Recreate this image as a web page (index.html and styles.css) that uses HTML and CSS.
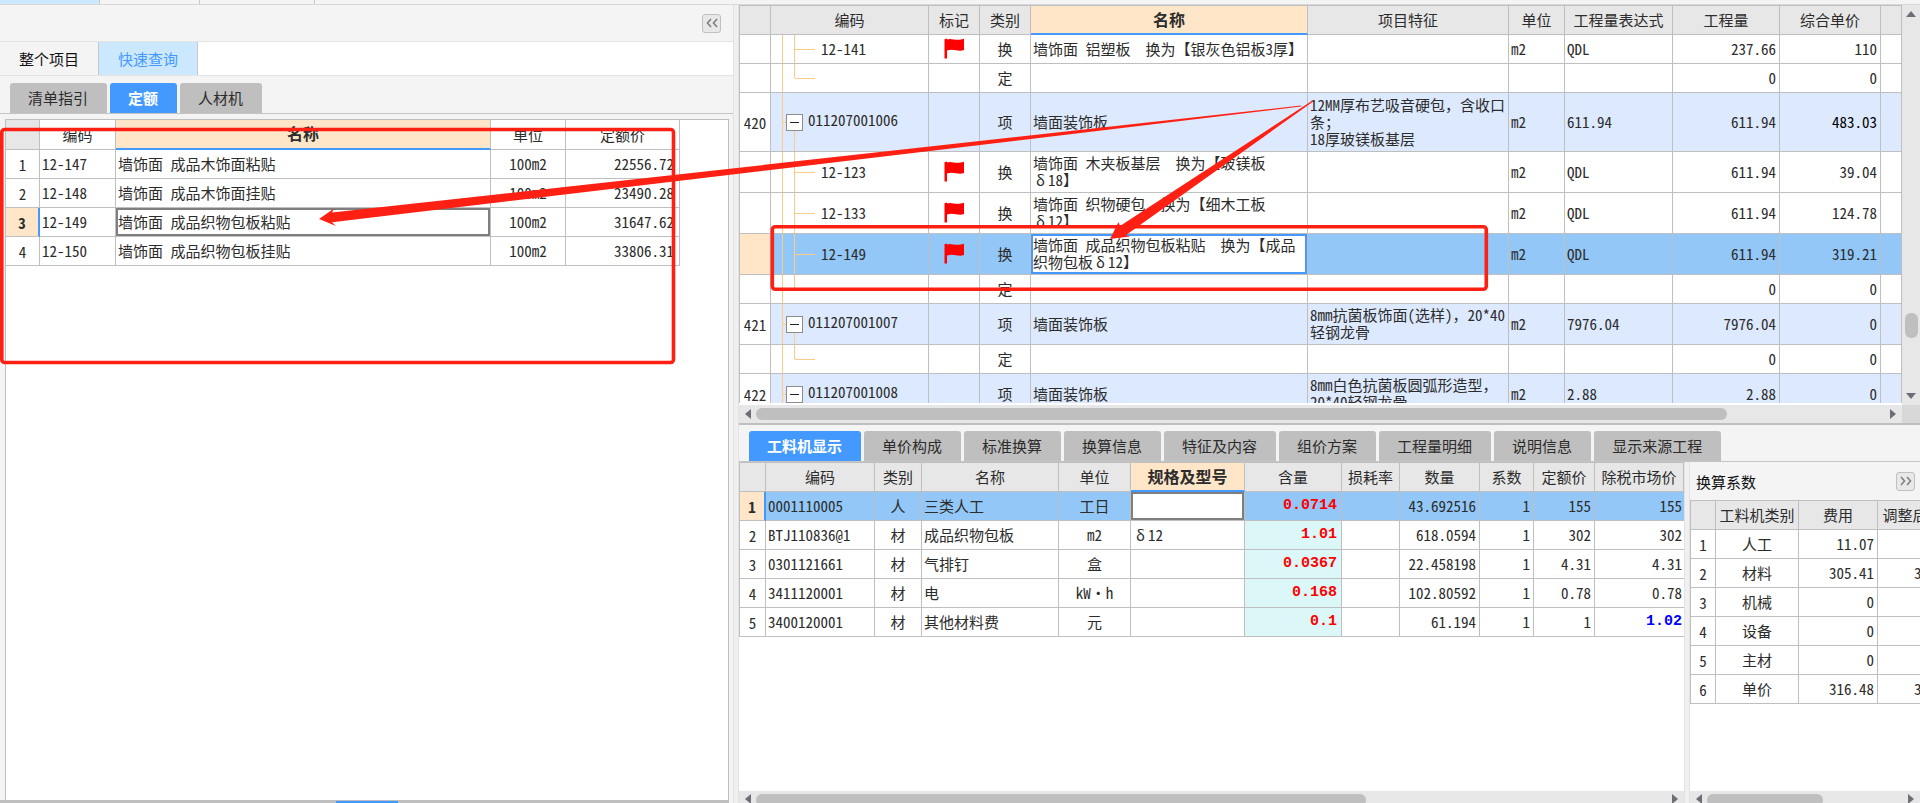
FILE: index.html
```html
<!DOCTYPE html>
<html lang="zh-CN">
<head>
<meta charset="utf-8">
<title>工程计价</title>
<link rel="stylesheet" href="styles.css">
</head>
<body>
<svg class="defs" aria-hidden="true">
  <symbol id="flag" viewBox="0 0 20 21"><path d="M0.5 1.2 L3 0.6 V20.5 H0.5Z M3 1.5 C8 -0.5 11 3.5 20 0.8 V12 C14 14.5 10 10 3 12.6Z" fill="#ff0000"/></symbol>
  <symbol id="left2" viewBox="0 0 12 10"><path d="M5 1 L1.5 5 L5 9 M11 1 L7.5 5 L11 9" fill="none" stroke="#808080" stroke-width="1.6"/></symbol>
  <symbol id="right2" viewBox="0 0 12 10"><path d="M1 1 L4.5 5 L1 9 M7 1 L10.5 5 L7 9" fill="none" stroke="#808080" stroke-width="1.6"/></symbol>
</svg>
<div class="strip"><span class="on"></span><span></span><span class="wide"></span></div>
<main class="app">
  <section class="left">
    <header class="bar"><button class="fold" aria-label="收起"><svg><use href="#left2"/></svg></button></header>
    <nav class="views"><button>整个项目</button><button class="on">快速查询</button></nav>
    <nav class="tabs"><button>清单指引</button><button class="on">定额</button><button>人材机</button></nav>
    <div class="sheet">
      <table class="grid quota">
        <colgroup><col class="w34"><col class="w76"><col class="w375"><col class="w75"><col class="w114"></colgroup>
        <thead><tr><th class="corner"></th><th>编码</th><th class="cur">名称</th><th>单位</th><th>定额价</th></tr></thead>
        <tbody>
          <tr><td class="n">1</td><td>12-147</td><td>墙饰面 成品木饰面粘贴</td><td class="c">100m2</td><td class="r">22556.72</td></tr>
          <tr><td class="n">2</td><td>12-148</td><td>墙饰面 成品木饰面挂贴</td><td class="c">100m2</td><td class="r">23490.28</td></tr>
          <tr><td class="n now">3</td><td>12-149</td><td class="focus">墙饰面 成品织物包板粘贴</td><td class="c">100m2</td><td class="r">31647.62</td></tr>
          <tr><td class="n">4</td><td>12-150</td><td>墙饰面 成品织物包板挂贴</td><td class="c">100m2</td><td class="r">33806.31</td></tr>
        </tbody>
      </table>
    </div>
    <div class="foot"><span></span></div>
  </section>
  <div class="split"></div>
  <section class="right">
    <div class="upper">
      <div class="clip">
        <table class="grid list">
          <colgroup><col class="w31"><col class="w158"><col class="w51"><col class="w51"><col class="w277"><col class="w201"><col class="w56"><col class="w108"><col class="w107"><col class="w101"><col></colgroup>
          <thead><tr><th></th><th>编码</th><th>标记</th><th>类别</th><th class="cur">名称</th><th>项目特征</th><th>单位</th><th>工程量表达式</th><th>工程量</th><th>综合单价</th><th></th></tr></thead>
          <tbody>
            <tr><td class="n"></td><td class="leaf">12-141</td><td class="c"><svg class="flag"><use href="#flag"/></svg></td><td class="c">换</td><td>墙饰面 铝塑板　换为【银灰色铝板3厚】</td><td></td><td>m2</td><td>QDL</td><td class="r">237.66</td><td class="r">110</td><td></td></tr>
            <tr><td class="n"></td><td class="leaf last"></td><td></td><td class="c">定</td><td></td><td></td><td></td><td></td><td class="r">0</td><td class="r">0</td><td></td></tr>
            <tr class="item h59"><td class="n">420</td><td class="node"><button aria-label="折叠"></button>011207001006</td><td></td><td class="c">项</td><td>墙面装饰板</td><td>12MM厚布艺吸音硬包，含收口<br>条；<br>18厚玻镁板基层</td><td>m2</td><td>611.94</td><td class="r">611.94</td><td class="r mark">483.03</td><td></td></tr>
            <tr class="h41"><td class="n"></td><td class="leaf">12-123</td><td class="c"><svg class="flag"><use href="#flag"/></svg></td><td class="c">换</td><td>墙饰面 木夹板基层　换为【玻镁板<br><span class="delta">δ</span>18】</td><td></td><td>m2</td><td>QDL</td><td class="r">611.94</td><td class="r">39.04</td><td></td></tr>
            <tr class="h41"><td class="n"></td><td class="leaf">12-133</td><td class="c"><svg class="flag"><use href="#flag"/></svg></td><td class="c">换</td><td>墙饰面 织物硬包　换为【细木工板<br><span class="delta">δ</span>12】</td><td></td><td>m2</td><td>QDL</td><td class="r">611.94</td><td class="r">124.78</td><td></td></tr>
            <tr class="h41 sel"><td class="n cream"></td><td class="leaf">12-149</td><td class="c"><svg class="flag"><use href="#flag"/></svg></td><td class="c">换</td><td class="edit">墙饰面 成品织物包板粘贴　换为【成品<br>织物包板<span class="delta">δ</span>12】</td><td></td><td>m2</td><td>QDL</td><td class="r">611.94</td><td class="r">319.21</td><td></td></tr>
            <tr><td class="n"></td><td class="leaf last"></td><td></td><td class="c">定</td><td></td><td></td><td></td><td></td><td class="r">0</td><td class="r">0</td><td></td></tr>
            <tr class="item h41"><td class="n">421</td><td class="node"><button aria-label="折叠"></button>011207001007</td><td></td><td class="c">项</td><td>墙面装饰板</td><td>8mm抗菌板饰面(选样)，20*40<br>轻钢龙骨</td><td>m2</td><td>7976.04</td><td class="r">7976.04</td><td class="r">0</td><td></td></tr>
            <tr><td class="n"></td><td class="leaf last"></td><td></td><td class="c">定</td><td></td><td></td><td></td><td></td><td class="r">0</td><td class="r">0</td><td></td></tr>
            <tr class="item h41"><td class="n">422</td><td class="node"><button aria-label="折叠"></button>011207001008</td><td></td><td class="c">项</td><td>墙面装饰板</td><td>8mm白色抗菌板圆弧形造型，<br>20*40轻钢龙骨</td><td>m2</td><td>2.88</td><td class="r">2.88</td><td class="r">0</td><td></td></tr>
          </tbody>
        </table>
      </div>
      <div class="vbar"><i class="up"></i><span class="before"></span><b></b><span class="after"></span><i class="down"></i></div>
      <div class="hbar"><i class="lt"></i><div class="track"><b class="t-list"></b></div><i class="rt"></i></div>
      <div class="nook"></div>
    </div>
    <div class="lower">
      <nav class="tabs"><button class="on">工料机显示</button><button>单价构成</button><button>标准换算</button><button>换算信息</button><button>特征及内容</button><button>组价方案</button><button>工程量明细</button><button>说明信息</button><button>显示来源工程</button></nav>
      <div class="pair">
        <div class="detail">
          <div class="clip">
            <table class="grid parts">
              <colgroup><col class="w26"><col class="w109"><col class="w47"><col class="w137"><col class="w72"><col class="w114"><col class="w97"><col class="w58"><col class="w80"><col class="w54"><col class="w61"><col></colgroup>
              <thead><tr><th></th><th>编码</th><th>类别</th><th>名称</th><th>单位</th><th class="cur">规格及型号</th><th>含量</th><th>损耗率</th><th>数量</th><th>系数</th><th>定额价</th><th>除税市场价</th></tr></thead>
              <tbody>
                <tr class="sel"><td class="n now">1</td><td>0001110005</td><td class="c">人</td><td>三类人工</td><td class="c">工日</td><td class="focus"></td><td class="r qty">0.0714</td><td></td><td class="r">43.692516</td><td class="r">1</td><td class="r">155</td><td class="r end">155</td></tr>
                <tr><td class="n">2</td><td>BTJ110836@1</td><td class="c">材</td><td>成品织物包板</td><td class="c">m2</td><td><span class="delta">δ</span>12</td><td class="r qty">1.01</td><td></td><td class="r">618.0594</td><td class="r">1</td><td class="r">302</td><td class="r end">302</td></tr>
                <tr><td class="n">3</td><td>0301121661</td><td class="c">材</td><td>气排钉</td><td class="c">盒</td><td></td><td class="r qty">0.0367</td><td></td><td class="r">22.458198</td><td class="r">1</td><td class="r">4.31</td><td class="r end">4.31</td></tr>
                <tr><td class="n">4</td><td>3411120001</td><td class="c">材</td><td>电</td><td class="c">kW・h</td><td></td><td class="r qty">0.168</td><td></td><td class="r">102.80592</td><td class="r">1</td><td class="r">0.78</td><td class="r end">0.78</td></tr>
                <tr><td class="n">5</td><td>3400120001</td><td class="c">材</td><td>其他材料费</td><td class="c">元</td><td></td><td class="r qty">0.1</td><td></td><td class="r">61.194</td><td class="r">1</td><td class="r">1</td><td class="r end blue">1.02</td></tr>
              </tbody>
            </table>
          </div>
          <div class="hbar"><i class="lt"></i><div class="track"><b class="t-parts"></b></div><i class="rt"></i></div>
        </div>
        <div class="split"></div>
        <aside class="factor">
          <header class="bar"><h2>换算系数</h2><button class="fold" aria-label="收起"><svg><use href="#right2"/></svg></button></header>
          <div class="clip">
            <table class="grid rates">
              <colgroup><col class="w25"><col class="w83"><col class="w79"><col class="w85"></colgroup>
              <thead><tr><th></th><th>工料机类别</th><th>费用</th><th>调整后费用</th></tr></thead>
              <tbody>
                <tr><td class="n">1</td><td class="c">人工</td><td class="r">11.07</td><td class="r">11.07</td></tr>
                <tr><td class="n">2</td><td class="c">材料</td><td class="r">305.41</td><td class="r">305.41</td></tr>
                <tr><td class="n">3</td><td class="c">机械</td><td class="r">0</td><td class="r">0</td></tr>
                <tr><td class="n">4</td><td class="c">设备</td><td class="r">0</td><td class="r">0</td></tr>
                <tr><td class="n">5</td><td class="c">主材</td><td class="r">0</td><td class="r">0</td></tr>
                <tr><td class="n">6</td><td class="c">单价</td><td class="r">316.48</td><td class="r">316.48</td></tr>
              </tbody>
            </table>
          </div>
          <div class="hbar"><i class="lt"></i><div class="track"><b class="t-rates"></b></div><i class="rt"></i></div>
        </aside>
      </div>
    </div>
  </section>
</main>
<svg class="notes" viewBox="0 0 1920 803" aria-hidden="true">
  <g fill="none" stroke="#ff2014" stroke-width="3.6">
    <rect x="1.8" y="129.5" width="671.7" height="233" rx="3"/>
    <rect x="772.3" y="226.7" width="714" height="62.6" rx="3"/>
  </g>
  <g fill="#ff2014">
    <path d="M319 219 L334 208.5 L332 212.6 L1301 105.6 L1301 106.6 L332 222.3 L336 226Z"/>
    <path d="M1110 239 L1118.5 222 L1120 226 L1312.5 100.5 L1313.2 101.5 L1126 235 L1130 236.5Z"/>
  </g>
</svg>
</body>
</html>
```
FILE: styles.css
```css
* { box-sizing: border-box; }
html, body { height: 100%; margin: 0; }
body {
  position: relative;
  display: flex;
  flex-direction: column;
  overflow: hidden;
  background: #f4f4f4;
  color: #2c2c2c;
  font-family: "Noto Sans Mono CJK SC", "Noto Sans CJK SC", "Liberation Mono", monospace;
  font-size: 15px;
  line-height: 17px;
}
button { font: inherit; color: inherit; border: 0; padding: 0; margin: 0; background: none; }
.defs { position: absolute; width: 0; height: 0; }
.notes { position: absolute; left: 0; top: 0; width: 100%; pointer-events: none; }

.strip { display: flex; flex: 0 0 5px; border-bottom: 1px solid #d8d8d8; }
.strip span { width: 100px; border-right: 1px solid #c8c8c8; }
.strip .wide { width: 115px; }
.strip .on { background: #cce8ff; }

.app { flex: 1; min-height: 0; display: grid; grid-template-columns: minmax(0, 733fr) 6px minmax(0, 1181fr); }
.split { background: #f0f0f0; border: solid #e2e2e2; border-width: 0 1px; }

.left { display: flex; flex-direction: column; min-height: 0; }
.bar { display: flex; align-items: center; }
.left .bar { height: 37px; justify-content: flex-end; padding-right: 12px; border-bottom: 1px solid #e4e4e4; }
.fold { display: flex; align-items: center; justify-content: center; width: 19px; height: 19px; border: 1px solid #c0c0c0; border-radius: 3px; background: #e8e8e8; }
.fold svg { width: 12px; height: 10px; }

.views { display: flex; height: 34px; background: #fff; border-bottom: 1px solid #e4e4e4; }
.views button { width: 99px; background: #f4f4f4; border-right: 1px solid #c8c8c8; color: #111; }
.views .on { background: #cce8ff; color: #4499ff; }

.tabs { display: flex; gap: 3px; border-bottom: 1px solid #c4c4c4; }
.tabs button { padding: 0 19px 1px 18px; background: #bfbfbf; border-radius: 3px 3px 0 0; }
.tabs .on { background: #4499ff; color: #fff; font-weight: bold; }
.left .tabs { height: 38px; padding: 7px 0 0 10px; }

.sheet { flex: 1; min-height: 0; margin: 5px 4px 0 5px; border: 1px solid #bfbfbf; border-bottom: 0; background: #fff; }
.left .foot { height: 3px; margin-right: 4px; background: #bfbfbf; display: flex; }
.foot span { width: 62px; margin: 1px 0 0 336px; background: #4499ff; }

.grid { width: 100%; table-layout: fixed; border-collapse: separate; border-spacing: 0; white-space: pre; background: #fff; }
.grid th, .grid td { height: 29px; padding: 0 3px 2px 2px; border: solid #bfbfbf; border-width: 0 1px 1px 0; overflow: hidden; }
.grid th { padding: 0 0 1px; background: #e7e7e7; font-weight: normal; text-align: center; }
.grid td { text-align: left; }
.grid .cur { background: #ffe6c8; font-size: 16px; font-weight: bold; border-bottom: 2px solid #4499ff; }
.grid .n { padding: 0; text-align: center; background: #fff; }
.grid .c { padding: 0 0 2px; text-align: center; }
.grid .r { text-align: right; }
.grid .now { background: #ffe6c8; font-weight: bold; border-right: 2px solid #4499ff; }
.grid .focus { background: #fff; box-shadow: inset 0 0 0 2px #7f7f7f; }
.grid .sel td { background-color: #92c7f7; }
.grid .sel .n { background-color: #ffe6c8; }
.grid .sel .focus { background-color: #fff; }
.grid .sel .edit { background-color: #fff; box-shadow: inset 0 0 0 2px #4499ff; }
.grid .item td { background-color: #dde9fe; }
.grid .item .n { background-color: #fff; }
.grid .h41 td { height: 41px; }
.grid .h59 td { height: 59px; }
.delta { display: inline-block; width: 15px; text-align: center; }

.w25 { width: 25px; } .w26 { width: 26px; } .w31 { width: 31px; } .w34 { width: 34px; }
.w47 { width: 47px; } .w51 { width: 51px; } .w54 { width: 54px; } .w56 { width: 56px; }
.w58 { width: 58px; } .w61 { width: 61px; } .w72 { width: 72px; } .w75 { width: 75px; }
.w76 { width: 76px; } .w79 { width: 79px; } .w80 { width: 80px; } .w83 { width: 83px; }
.w85 { width: 85px; } .w97 { width: 97px; } .w101 { width: 101px; } .w107 { width: 107px; }
.w108 { width: 108px; } .w109 { width: 109px; } .w114 { width: 114px; } .w137 { width: 137px; }
.w158 { width: 158px; } .w201 { width: 201px; } .w277 { width: 277px; } .w375 { width: 375px; }

.quota { width: 674px; }
.quota th { height: 30px; background: #fff; }
.quota .corner { background: #e7e7e7; }
.quota .r { padding-right: 5px; }
.list, .parts, .rates { border: solid #bfbfbf; border-width: 1px 0 0 1px; }
.list .mark { color: #000; font-weight: 500; }
.parts .qty { padding-right: 4px; background-color: #dbf7f7; color: #ff0000; font-family: "Liberation Mono", monospace; font-weight: bold; }
.parts .end { border-right: 0; padding-right: 2px; }
.parts .blue { color: #0000ff; font-family: "Liberation Mono", monospace; font-weight: bold; }
.rates { width: 273px; }
.flag { display: block; width: 20px; height: 21px; margin: 0 auto; }

.grid .leaf, .grid .node { background-repeat: no-repeat; }
.grid .leaf {
  padding-left: 50px;
  background-image: linear-gradient(#fdcb85, #fdcb85), linear-gradient(#fdcb85, #fdcb85), linear-gradient(#fdcb85, #fdcb85);
  background-size: 1px 100%, 1px 100%, 20px 1px;
  background-position: 11px 0, 23px 0, 24px 50%;
}
.grid .last { background-size: 1px 100%, 1px 50%, 20px 1px; }
.grid .node {
  padding-left: 15px;
  background-image: linear-gradient(#fdcb85, #fdcb85), linear-gradient(#fdcb85, #fdcb85), linear-gradient(#fdcb85, #fdcb85);
  background-size: 1px 100%, 1px 50%, 4px 1px;
  background-position: 11px 0, 23px 100%, 12px 50%;
}
.node button { width: 17px; height: 17px; margin-right: 5px; vertical-align: middle; border: 1px solid #8c8c8c; background: linear-gradient(#222, #222) center / 9px 1px no-repeat #fff; }

.right { display: grid; grid-template-rows: minmax(0, 420fr) minmax(0, 378fr); min-height: 0; }
.upper { display: grid; grid-template: minmax(0, 1fr) 18px / minmax(0, 1fr) 18px; border-bottom: 2px solid #bfbfbf; }
.clip { overflow: hidden; min-height: 0; background: #fff; }
.upper .clip { border-bottom: 2px solid #fff; }
.nook { background: #d8d8d8; }

.hbar { display: flex; align-items: center; height: 18px; padding: 0 6px; gap: 5px; background: #e7e7e7; }
.track { flex: 1; height: 12px; }
.hbar b { display: block; height: 12px; border-radius: 6px; background: #bfbfbf; }
.t-list { width: 86%; }
.t-parts { width: 67%; }
.t-rates { width: 59%; }
.hbar i { border: solid transparent; border-width: 5px 0; }
.hbar .lt { border-right: 6px solid #6e6e78; }
.hbar .rt { border-left: 6px solid #6e6e78; }
.vbar { display: flex; flex-direction: column; align-items: center; padding: 6px 0; background: #e7e7e7; }
.vbar i { border: solid transparent; border-width: 0 5px; }
.vbar .up { border-bottom: 6px solid #6e6e78; }
.vbar .down { border-top: 6px solid #6e6e78; }
.vbar b { width: 13px; height: 25px; border-radius: 6px; background: #bfbfbf; }
.before { flex: 296; }
.after { flex: 55; }

.lower { display: flex; flex-direction: column; min-height: 0; }
.lower .tabs { flex: 0 0 37px; padding: 6px 0 0 10px; }
.pair { flex: 1; min-height: 0; display: grid; grid-template-columns: minmax(0, 945fr) 6px minmax(0, 230fr); }
.detail, .factor { display: flex; flex-direction: column; min-height: 0; min-width: 0; }
.detail .clip, .factor .clip { flex: 1; }
.detail .hbar, .factor .hbar { flex: 0 0 12px; align-items: flex-start; padding-top: 3px; overflow: hidden; }
.factor .bar { flex: 0 0 38px; justify-content: space-between; padding: 0 5px 0 6px; }
.bar h2 { margin: 0; font-size: 15px; font-weight: normal; color: #111; }
```
